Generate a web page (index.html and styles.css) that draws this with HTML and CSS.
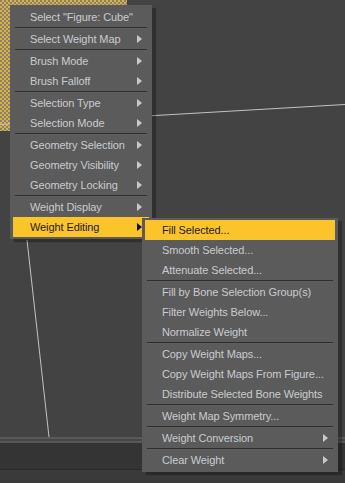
FILE: index.html
```html
<!DOCTYPE html>
<html lang="en">

<head>
    <meta charset="UTF-8">
    <meta name="viewport" content="width=device-width, initial-scale=1.0">
    <title>Weight Editing</title>

    <link rel="stylesheet" href="styles.css">
</head>

<body>
    <div class="viewport">
        <div class="floor"></div>
        <svg class="wires" width="345" height="437" viewBox="0 0 345 437">
            <line x1="0" y1="124.5" x2="345" y2="104.5" />
            <line x1="27" y1="240" x2="49" y2="437" />
        </svg>

        <ul class="menu menu_main">
            <li class="item">Select "Figure: Cube"</li>
            <li class="sep"></li>
            <li class="item sub">Select Weight Map</li>
            <li class="sep"></li>
            <li class="item sub">Brush Mode</li>
            <li class="item sub">Brush Falloff</li>
            <li class="sep"></li>
            <li class="item sub">Selection Type</li>
            <li class="item sub">Selection Mode</li>
            <li class="sep"></li>
            <li class="item sub">Geometry Selection</li>
            <li class="item sub">Geometry Visibility</li>
            <li class="item sub">Geometry Locking</li>
            <li class="sep"></li>
            <li class="item sub">Weight Display</li>
            <li class="item sub active">Weight Editing</li>
        </ul>

        <ul class="menu menu_sub">
            <li class="item active">Fill Selected...</li>
            <li class="item">Smooth Selected...</li>
            <li class="item">Attenuate Selected...</li>
            <li class="sep"></li>
            <li class="item">Fill by Bone Selection Group(s)</li>
            <li class="item">Filter Weights Below...</li>
            <li class="item">Normalize Weight</li>
            <li class="sep"></li>
            <li class="item">Copy Weight Maps...</li>
            <li class="item">Copy Weight Maps From Figure...</li>
            <li class="item">Distribute Selected Bone Weights</li>
            <li class="sep"></li>
            <li class="item">Weight Map Symmetry...</li>
            <li class="sep"></li>
            <li class="item sub">Weight Conversion</li>
            <li class="sep"></li>
            <li class="item sub">Clear Weight</li>
        </ul>
    </div>

    <div class="splitter"></div>
    <div class="panel"></div>
    <div class="footer"></div>
</body>

</html>
```

FILE: styles.css
```css
* {
    padding: 0;
    margin: 0;
    box-sizing: border-box;
}

body {
    width: 345px;
    height: 483px;
    overflow: hidden;
    background-color: #434343;
    font-family: "Liberation Sans", Arial, sans-serif;
    font-size: 11px;
}

.viewport {
    position: relative;
    height: 437px;
    background-color: #434343;
}

/* 바닥 격자 (노란 체크) */
.floor {
    position: absolute;
    left: 0;
    top: 0;
    width: 127px;
    height: 131px;
    background-color: #8a8270;
    background-image:
        linear-gradient(45deg, #d9b243 25%, transparent 25%, transparent 75%, #d9b243 75%),
        linear-gradient(45deg, #d9b243 25%, transparent 25%, transparent 75%, #d9b243 75%);
    background-size: 4px 4px;
    background-position: 0 0, 2px 2px;
}

.wires {
    position: absolute;
    left: 0;
    top: 0;
}

.wires line {
    stroke: #c4c4bc;
    stroke-width: 1;
}

.menu {
    position: absolute;
    list-style: none;
    padding: 2px 0;
    background-color: #5b5b5b;
    box-shadow: 4px 3px 1px rgba(0, 0, 0, .28);
}

.menu_main {
    left: 10px;
    top: 5px;
    width: 142px;
}

.menu_sub {
    left: 142px;
    top: 218px;
    width: 196px;
}

.menu .item {
    position: relative;
    height: 20px;
    line-height: 20px;
    margin: 0 3px;
    padding-left: 17px;
    color: #c9cbcf;
    letter-spacing: -0.1px;
    white-space: nowrap;
}

.menu .item.active {
    background-color: #fbc42b;
    color: #1b1b1b;
}

/* 하위메뉴 화살표 */
.menu .sub::after {
    content: "";
    position: absolute;
    right: 7px;
    top: 6px;
    border-top: 4px solid transparent;
    border-bottom: 4px solid transparent;
    border-left: 5px solid #c9c9c9;
}

.menu .sub.active::after {
    border-left-color: #111;
}

.menu .sep {
    height: 2px;
    margin: 0 5px;
    border-top: 1px solid #2f2f2f;
    border-bottom: 1px solid #5e5e5e;
}

.splitter {
    height: 6px;
    border-top: 2px solid #5a5a5a;
    border-bottom: 2px solid #585858;
    background-color: #474747;
}

.panel {
    height: 27px;
    background-color: #343434;
    border-bottom: 1px solid #2b2b2b;
}

.footer {
    height: 13px;
    background-color: #3a3a3a;
}
```
